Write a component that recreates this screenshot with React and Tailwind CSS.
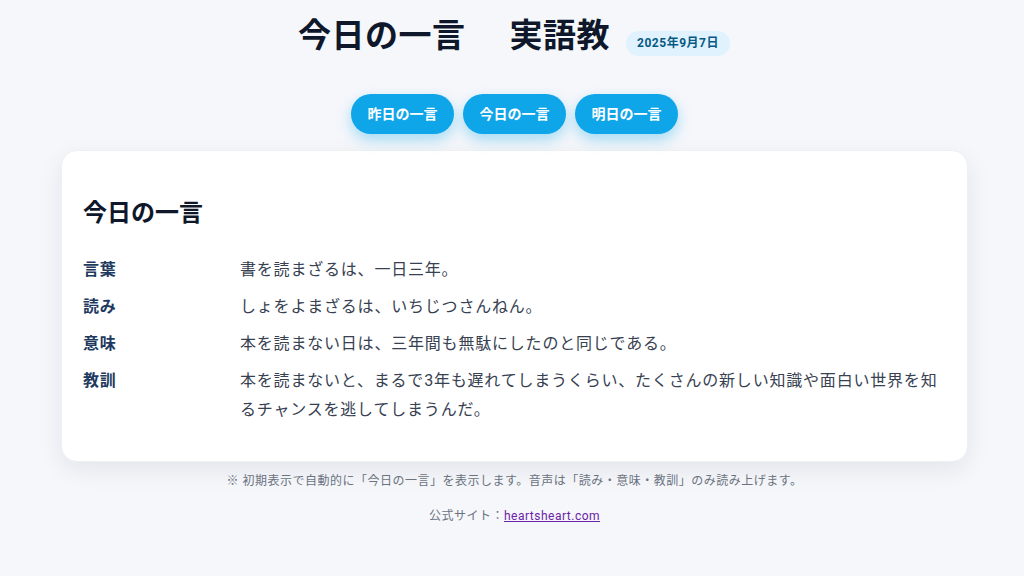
import React from "react";

const rows = [
  { label: "言葉", value: "書を読まざるは、一日三年。" },
  { label: "読み", value: "しょをよまざるは、いちじつさんねん。" },
  { label: "意味", value: "本を読まない日は、三年間も無駄にしたのと同じである。" },
  {
    label: "教訓",
    value:
      "本を読まないと、まるで3年も遅れてしまうくらい、たくさんの新しい知識や面白い世界を知るチャンスを逃してしまうんだ。",
  },
];

export default function App() {
  return (
    <div
      className="min-h-screen bg-[#f5f7fb] text-[#0f172a]"
      style={{ fontFamily: 'Roboto, "Noto Sans CJK JP", sans-serif' }}
    >
      <header className="pt-[15px] flex items-center justify-center gap-4 pl-[4px]">
        <h1 className="text-[33px] leading-[42px] font-bold tracking-[0.5px] text-[#0f172a]">
          今日の一言<span className="ml-[44px]">実語教</span>
        </h1>
        <span className="mt-[14px] px-[11px] h-[25px] inline-flex items-center rounded-full bg-[#e0f2fe] text-[#075985] text-[12px] font-bold tracking-[0.5px]">
          2025年9月7日
        </span>
      </header>

      <nav className="mt-[37px] flex justify-center gap-[9px] pl-[5px]">
        {["昨日の一言", "今日の一言", "明日の一言"].map((t) => (
          <button
            key={t}
            className="w-[103px] h-[40px] rounded-full bg-[#0ea5e9] text-white text-[14px] font-bold shadow-[0_6px_14px_rgba(14,165,233,0.35)]"
          >
            {t}
          </button>
        ))}
      </nav>

      <main className="mt-[16px] pl-[61px] pr-[56px]">
        <div className="bg-white rounded-2xl border border-[#eef0f4] shadow-[0_8px_24px_rgba(15,23,42,0.08)] px-[21px] pt-[46px] pb-[37px]">
          <h2 className="text-[24px] font-bold leading-[32px] text-[#0f172a]">今日の一言</h2>
          <dl className="mt-[26px] flex flex-col gap-[8px] tracking-[0.05em]">
            {rows.map((r) => (
              <div key={r.label} className="flex">
                <dt className="w-[157px] shrink-0 text-[16px] leading-[29px] font-bold text-[#1e3a5f]">
                  {r.label}
                </dt>
                <dd className="flex-1 text-[16px] leading-[29px] text-[#374151] pr-[2px]">{r.value}</dd>
              </div>
            ))}
          </dl>
        </div>
      </main>

      <p className="mt-[10px] text-center text-[12px] leading-[18px] text-[#6b7280] tracking-[0.5px] pl-[5px]">
        ※ 初期表示で自動的に「今日の一言」を表示します。音声は「読み・意味・教訓」のみ読み上げます。
      </p>
      <p className="mt-[17px] text-center text-[12px] leading-[18px] text-[#6b7280] tracking-[0.5px] pl-[5px]">
        公式サイト：<a href="#" className="underline text-[#6b21a8]">heartsheart.com</a>
      </p>
    </div>
  );
}
